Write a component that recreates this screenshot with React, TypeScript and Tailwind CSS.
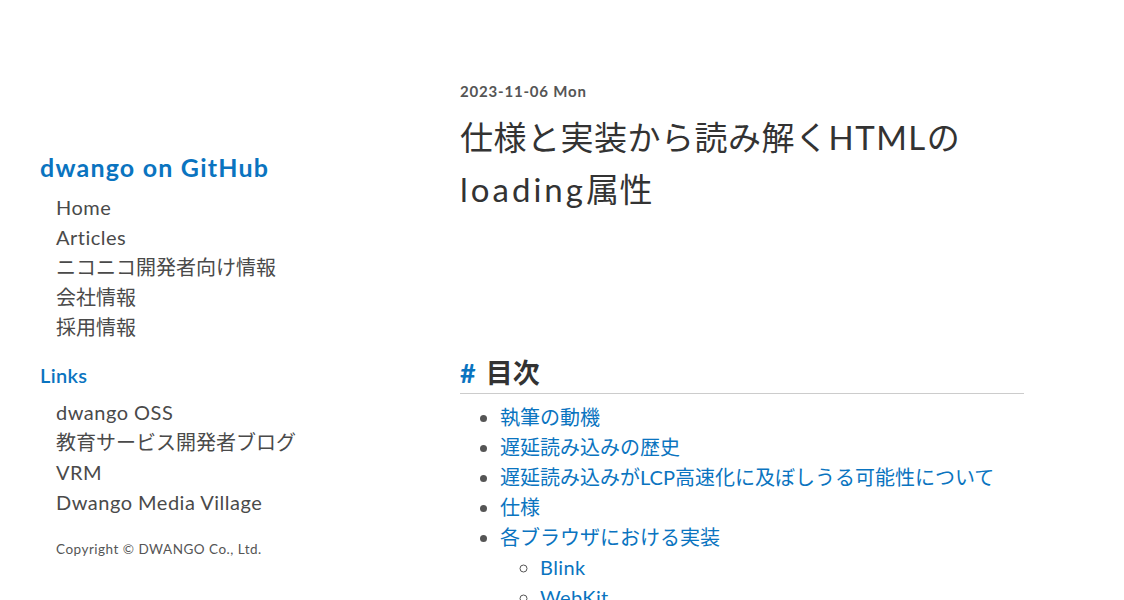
const navItems = ['Home', 'Articles', 'ニコニコ開発者向け情報', '会社情報', '採用情報']
const linkItems = ['dwango OSS', '教育サービス開発者ブログ', 'VRM', 'Dwango Media Village']

const toc = [
  '執筆の動機',
  '遅延読み込みの歴史',
  '遅延読み込みがLCP高速化に及ぼしうる可能性について',
  '仕様',
  '各ブラウザにおける実装',
]
const subToc = ['Blink', 'WebKit']

const font = "font-['Lato','Noto_Sans_CJK_JP',sans-serif]"

// latin labels get a little extra spacing so Lato reads as wide as the original face
const isLatin = (s: string) => /^[\x20-\x7e]+$/.test(s)

function NavList({ items }: { items: string[] }) {
  return (
    <ul className="pl-4">
      {items.map((item) => (
        <li
          key={item}
          className={`text-[20px] leading-[30px] text-[#4a4a4a] ${isLatin(item) ? 'tracking-[0.5px]' : 'tracking-[0px]'}`}
        >
          {item}
        </li>
      ))}
    </ul>
  )
}

function Sidebar() {
  return (
    <aside className="w-[460px] shrink-0 pl-10 pt-[150px]">
      <h1 className="text-[25px] font-bold leading-[34px] tracking-[1.2px] text-[#0a74c0]">dwango on GitHub</h1>
      <div className="mt-[8px]">
        <NavList items={navItems} />
      </div>
      <h2 className="mt-[19px] text-[20px] font-semibold leading-[28px] tracking-[0.3px] text-[#0a74c0]">Links</h2>
      <div className="mt-[8px]">
        <NavList items={linkItems} />
      </div>
      <p className="mt-[22px] pl-4 text-[13.5px] leading-[20px] tracking-[0.5px] text-[#555]">
        Copyright © DWANGO Co., Ltd.
      </p>
    </aside>
  )
}

function Article() {
  return (
    <main className="w-[564px] pt-[80px]">
      <p className="text-[15px] font-bold leading-[22px] tracking-[0.8px] text-[#555]">2023-11-06 Mon</p>
      <h1 className="mt-[9px] text-[33px] leading-[52px] tracking-[0.5px] text-[#333]">
        仕様と実装から読み解く<span className="tracking-[1.5px]">HTML</span>の
        <br />
        <span className="tracking-[3px]">loading</span>属性
      </h1>
      <h2 className="mt-[140px] flex items-center gap-[10px] border-b border-[#ccc] pb-[2px] text-[27px] font-bold leading-[36px] text-[#333]">
        <span className="text-[#0a74c0]">#</span>
        <span>目次</span>
      </h2>
      <ul className="mt-[8px] list-disc pl-10 marker:text-[#555]">
        {toc.map((item) => (
          <li key={item} className="text-[20px] leading-[30px] text-[#0a74c0]">
            {item}
          </li>
        ))}
        <li className="list-none">
          <ul className="list-[circle] pl-10 marker:text-[#555]">
            {subToc.map((item) => (
              <li key={item} className="text-[20px] leading-[30px] tracking-[0.4px] text-[#0a74c0]">
                {item}
              </li>
            ))}
          </ul>
        </li>
      </ul>
    </main>
  )
}

export default function App() {
  return (
    <div className={`flex h-[600px] overflow-hidden bg-white ${font}`}>
      <Sidebar />
      <Article />
    </div>
  )
}
